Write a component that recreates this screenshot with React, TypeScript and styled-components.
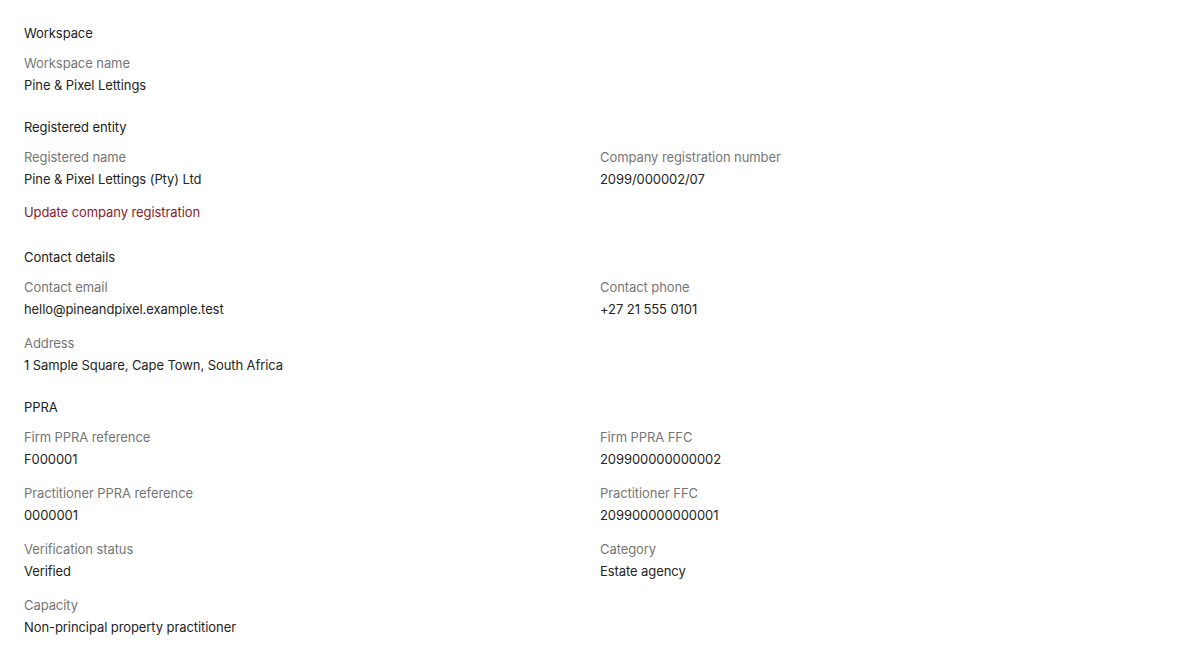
import React from "react";
import styled, { createGlobalStyle } from "styled-components";

const Global = createGlobalStyle`
  html, body { margin: 0; padding: 0; background: #fff; }
  body { font-family: Inter, "Noto Sans", sans-serif; -webkit-font-smoothing: antialiased; letter-spacing: -0.08px; }
`;

const Page = styled.div`
  padding: 22px 24px 24px;
  display: flex;
  flex-direction: column;
  gap: 20px;
`;

const Section = styled.section`
  display: flex;
  flex-direction: column;
  gap: 8px;
`;

const Heading = styled.h2`
  margin: 0;
  font-size: 13px;
  line-height: 22px;
  font-weight: 400;
  color: #1c1c1c;
`;

const Grid = styled.div`
  display: grid;
  grid-template-columns: 1fr 1fr;
  column-gap: 16px;
  row-gap: 12px;
`;

const Field = styled.div`
  display: flex;
  flex-direction: column;
`;

const Label = styled.div`
  font-size: 13px;
  line-height: 22px;
  color: #767676;
`;

const Value = styled.div`
  font-size: 13px;
  line-height: 22px;
  color: #242424;
`;

const LinkRow = styled.div`
  grid-column: 1 / -1;
  margin-top: -1px;
  margin-bottom: 3px;
`;

const Link = styled.a`
  font-size: 13px;
  line-height: 22px;
  color: #8a1c2b;
  text-decoration: none;
  cursor: pointer;
`;

const F = ({ label, value }: { label: string; value: string }) => (
  <Field>
    <Label>{label}</Label>
    <Value>{value}</Value>
  </Field>
);

export default function App() {
  return (
    <>
      <Global />
      <Page>
        <Section>
          <Heading>Workspace</Heading>
          <Grid>
            <F label="Workspace name" value="Pine & Pixel Lettings" />
          </Grid>
        </Section>
        <Section>
          <Heading>Registered entity</Heading>
          <Grid>
            <F label="Registered name" value="Pine & Pixel Lettings (Pty) Ltd" />
            <F label="Company registration number" value="2099/000002/07" />
            <LinkRow>
              <Link>Update company registration</Link>
            </LinkRow>
          </Grid>
        </Section>
        <Section>
          <Heading>Contact details</Heading>
          <Grid>
            <F label="Contact email" value="hello@pineandpixel.example.test" />
            <F label="Contact phone" value="+27 21 555 0101" />
            <F label="Address" value="1 Sample Square, Cape Town, South Africa" />
          </Grid>
        </Section>
        <Section>
          <Heading>PPRA</Heading>
          <Grid>
            <F label="Firm PPRA reference" value="F000001" />
            <F label="Firm PPRA FFC" value="209900000000002" />
            <F label="Practitioner PPRA reference" value="0000001" />
            <F label="Practitioner FFC" value="209900000000001" />
            <F label="Verification status" value="Verified" />
            <F label="Category" value="Estate agency" />
            <F label="Capacity" value="Non-principal property practitioner" />
          </Grid>
        </Section>
      </Page>
    </>
  );
}
